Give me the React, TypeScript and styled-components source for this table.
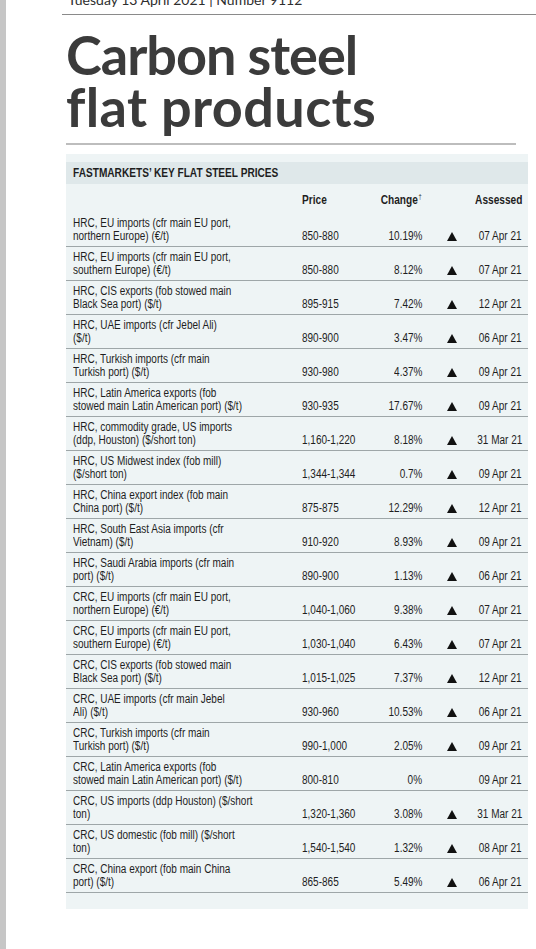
import React from 'react';
import styled, { createGlobalStyle } from 'styled-components';

interface PriceRow {
  label: [string, string];
  price: string;
  change: string;
  up: boolean;
  assessed: string;
}

const rows: PriceRow[] = [
  { label: ['HRC, EU imports (cfr main EU port,', 'northern Europe) (€/t)'], price: '850-880', change: '10.19%', up: true, assessed: '07 Apr 21' },
  { label: ['HRC, EU imports (cfr main EU port,', 'southern Europe) (€/t)'], price: '850-880', change: '8.12%', up: true, assessed: '07 Apr 21' },
  { label: ['HRC, CIS exports (fob stowed main', 'Black Sea port) ($/t)'], price: '895-915', change: '7.42%', up: true, assessed: '12 Apr 21' },
  { label: ['HRC, UAE imports (cfr Jebel Ali)', '($/t)'], price: '890-900', change: '3.47%', up: true, assessed: '06 Apr 21' },
  { label: ['HRC, Turkish imports (cfr main', 'Turkish port) ($/t)'], price: '930-980', change: '4.37%', up: true, assessed: '09 Apr 21' },
  { label: ['HRC, Latin America exports (fob', 'stowed main Latin American port) ($/t)'], price: '930-935', change: '17.67%', up: true, assessed: '09 Apr 21' },
  { label: ['HRC, commodity grade, US imports', '(ddp, Houston) ($/short ton)'], price: '1,160-1,220', change: '8.18%', up: true, assessed: '31 Mar 21' },
  { label: ['HRC, US Midwest index (fob mill)', '($/short ton)'], price: '1,344-1,344', change: '0.7%', up: true, assessed: '09 Apr 21' },
  { label: ['HRC, China export index (fob main', 'China port) ($/t)'], price: '875-875', change: '12.29%', up: true, assessed: '12 Apr 21' },
  { label: ['HRC, South East Asia imports (cfr', 'Vietnam) ($/t)'], price: '910-920', change: '8.93%', up: true, assessed: '09 Apr 21' },
  { label: ['HRC, Saudi Arabia imports (cfr main', 'port) ($/t)'], price: '890-900', change: '1.13%', up: true, assessed: '06 Apr 21' },
  { label: ['CRC, EU imports (cfr main EU port,', 'northern Europe) (€/t)'], price: '1,040-1,060', change: '9.38%', up: true, assessed: '07 Apr 21' },
  { label: ['CRC, EU imports (cfr main EU port,', 'southern Europe) (€/t)'], price: '1,030-1,040', change: '6.43%', up: true, assessed: '07 Apr 21' },
  { label: ['CRC, CIS exports (fob stowed main', 'Black Sea port) ($/t)'], price: '1,015-1,025', change: '7.37%', up: true, assessed: '12 Apr 21' },
  { label: ['CRC, UAE imports (cfr main Jebel', 'Ali) ($/t)'], price: '930-960', change: '10.53%', up: true, assessed: '06 Apr 21' },
  { label: ['CRC, Turkish imports (cfr main', 'Turkish port) ($/t)'], price: '990-1,000', change: '2.05%', up: true, assessed: '09 Apr 21' },
  { label: ['CRC, Latin America exports (fob', 'stowed main Latin American port) ($/t)'], price: '800-810', change: '0%', up: false, assessed: '09 Apr 21' },
  { label: ['CRC, US imports (ddp Houston) ($/short', 'ton)'], price: '1,320-1,360', change: '3.08%', up: true, assessed: '31 Mar 21' },
  { label: ['CRC, US domestic (fob mill) ($/short', 'ton)'], price: '1,540-1,540', change: '1.32%', up: true, assessed: '08 Apr 21' },
  { label: ['CRC, China export (fob main China', 'port) ($/t)'], price: '865-865', change: '5.49%', up: true, assessed: '06 Apr 21' },
];

type Align = 'start' | 'center' | 'end';

const GlobalStyle = createGlobalStyle`
  html, body {
    margin: 0;
    padding: 0;
    background: #fff;
    overflow: hidden;
  }
`;

const Page = styled.div`
  display: flex;
  min-height: 949px;
`;

const LeftRail = styled.div`
  width: 6px;
  flex-shrink: 0;
  background: #c6c6c6;
`;

const Content = styled.div`
  flex: 1;
  min-width: 0;
  padding: 0 8px 0 60px;
`;

const Dateline = styled.div`
  margin: -9px -8px 0 -4px;
  padding: 0 0 6px 6px;
  border-bottom: 1.5px solid #8a8a8a;
  font-family: 'Lato', sans-serif;
  font-size: 14px;
  color: #2e2e2e;
  white-space: nowrap;
`;

const Title = styled.h1`
  margin: 14px 0 0;
  font-family: 'Lato', sans-serif;
  font-weight: 700;
  font-size: 54px;
  line-height: 52px;
  letter-spacing: -1px;
  color: #3b3b3b;
`;

const TitleLine = styled.span<{ $spread?: number }>`
  display: block;
  letter-spacing: ${(p) => p.$spread ?? -1}px;
`;

const Rule = styled.hr`
  margin: 10px 12px 0 0;
  border: 0;
  border-top: 2px solid #bdbdbd;
`;

const Panel = styled.section`
  margin-top: 9px;
  background: #eef4f5;
  padding: 8px 0 16px;
  font-family: 'Liberation Sans', Arial, sans-serif;
  font-size: 12.5px;
  color: #1e1e1e;
`;

const HeaderBar = styled.div`
  height: 22px;
  display: flex;
  align-items: center;
  padding-left: 7px;
  background: #dfe8ea;
  font-weight: 700;
`;

const Grid = styled.div`
  display: grid;
  grid-template-columns: 229px 67px 53px 60px 40px;
  padding: 0 6px 0 7px;
  align-items: end;
  box-sizing: border-box;
`;

const HeadRow = styled(Grid)`
  height: 29px;
  padding-bottom: 6px;
  font-weight: 700;
`;

const DataRow = styled(Grid)`
  height: 34px;
  padding-bottom: 3px;
  border-bottom: 1px solid #9ea6a8;
`;

const Label = styled.div`
  line-height: 13px;
  white-space: nowrap;
`;

const Cell = styled.div<{ $align?: Align }>`
  display: flex;
  justify-content: ${(p) => (p.$align === 'end' ? 'flex-end' : p.$align === 'center' ? 'center' : 'flex-start')};
  align-items: flex-end;
  line-height: 13px;
  white-space: nowrap;
`;

// the print uses a condensed grotesque; squeeze Liberation Sans to match
const Narrow = styled.span<{ $origin?: Align; $bold?: boolean }>`
  display: inline-block;
  transform: scaleX(${(p) => (p.$bold ? 0.81 : 0.8)});
  transform-origin: ${(p) => (p.$origin === 'end' ? 'right' : p.$origin === 'center' ? 'center' : 'left')} center;
  white-space: nowrap;
`;

const Dagger = styled.sup`
  font-size: 7px;
  font-weight: 400;
  vertical-align: 5px;
  margin-left: 1px;
`;

const Arrow = styled.span`
  display: inline-block;
  width: 0;
  height: 0;
  margin-bottom: 2.5px;
  border-left: 5.5px solid transparent;
  border-right: 5.5px solid transparent;
  border-bottom: 9.5px solid #111;
`;

export default function App() {
  return (
    <Page>
      <GlobalStyle />
      <LeftRail />
      <Content>
        <Dateline>Tuesday 13 April 2021 | Number 9112</Dateline>
        <Title>
          <TitleLine>Carbon steel</TitleLine>
          <TitleLine $spread={0.4}>flat products</TitleLine>
        </Title>
        <Rule />
        <Panel>
          <HeaderBar>
            <Narrow $bold>FASTMARKETS’ KEY FLAT STEEL PRICES</Narrow>
          </HeaderBar>
          <HeadRow>
            <Cell />
            <Cell>
              <Narrow $bold>Price</Narrow>
            </Cell>
            <Cell $align="end">
              <Narrow $bold $origin="end">
                Change<Dagger>†</Dagger>
              </Narrow>
            </Cell>
            <Cell />
            <Cell $align="end">
              <Narrow $bold $origin="end">Assessed</Narrow>
            </Cell>
          </HeadRow>
          {rows.map((r) => (
            <DataRow key={r.label.join(' ')}>
              <Label>
                <Narrow>{r.label[0]}</Narrow>
                <br />
                <Narrow>{r.label[1]}</Narrow>
              </Label>
              <Cell>
                <Narrow>{r.price}</Narrow>
              </Cell>
              <Cell $align="end">
                <Narrow $origin="end">{r.change}</Narrow>
              </Cell>
              <Cell $align="center">{r.up ? <Arrow /> : null}</Cell>
              <Cell $align="end">
                <Narrow $origin="end">{r.assessed}</Narrow>
              </Cell>
            </DataRow>
          ))}
        </Panel>
      </Content>
    </Page>
  );
}
